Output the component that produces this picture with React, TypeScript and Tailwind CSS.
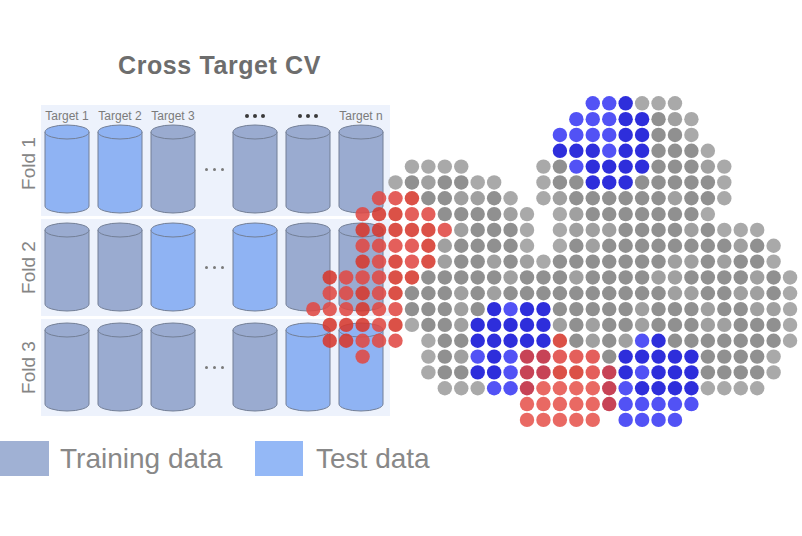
import React from "react";

// dot cloud: g = gray, b = blue, r = red, d = dark red
const GRID = [
  ".................bbbggg.......",
  "................bbbbbggg......",
  "...............bbbbbbggg......",
  "...............bbbbbbgggg.....",
  "......gggg....ggbbbbbggggg....",
  ".....ggggggg..gggbbbgggggg....",
  "....rrrgggggg.gggggggggggg....",
  "...rrrrrgggggg.gggggggggg.....",
  "...rrrrrrggggg.ggggggggggggg..",
  "...rrrrrgggggg.gggggggggggggg.",
  "...rrrrrggggggggggggggggggggg.",
  ".rrrrrrggggggggggggggggggggggg",
  ".rrrrrgggggggggggggggggggggggg",
  "rrrrrrgggggbbbbggggggggggggggg",
  ".rrrrrggggbbbbbggggggggggggggg",
  ".rrrrr.gggbbbbbrggggbbgggggggg",
  "...r...gggbbbddrrrgbbbbbggggg.",
  ".......gggbbbddrrrdbbbbbggggg.",
  "........gggbbdrrrrdbbbbbgggg..",
  ".............rrrrrdbbbbb......",
  ".............rrrrr.bbbb.......",
];

const X0 = 313.3;
const DX = 16.44;
const Y0 = 103.3;
const DY = 15.83;

const hash = (r: number, c: number) => (((r * 92821) ^ (c * 68917) ^ (r * c * 31)) >>> 0) % 100;

const cell = (r: number, c: number) => (GRID[r] ? GRID[r][c] ?? "." : ".");

function dotColor(r: number, c: number, k: string) {
  const h = hash(r, c);
  if (k === "g") {
    const edge = [cell(r - 1, c), cell(r + 1, c), cell(r, c - 1), cell(r, c + 1)].some((n) => n === ".");
    if (edge) return "#a4a4a4";
    return h < 30 ? "#9b9b9b" : "#8a8a8a";
  }
  if (k === "b") {
    const light = (r <= 2 && c <= 18) || r >= 19 || (r >= 16 && c === 12) || (r === 18 && c === 11) || h < 15;
    return light ? "#4848f4" : "#2323d9";
  }
  if (k === "d") return "#bf2a3f";
  if (r >= 18) return "#e6544e";
  return h < 45 ? "#d63a2f" : "#e04a44";
}

function DotCloud() {
  const dots: React.ReactNode[] = [];
  GRID.forEach((row, r) => {
    row.split("").forEach((k, c) => {
      if (k === ".") return;
      dots.push(
        <circle
          key={`${r}-${c}`}
          cx={X0 + DX * c}
          cy={Y0 + DY * r}
          r={7.2}
          fill={dotColor(r, c, k)}
          fillOpacity={k === "r" || k === "d" ? 0.88 : 0.95}
        />
      );
    });
  });
  return (
    <svg className="absolute inset-0 pointer-events-none" width="802" height="536" viewBox="0 0 802 536">
      <defs>
        <filter id="soft" x="-5%" y="-5%" width="110%" height="110%">
          <feGaussianBlur stdDeviation="0.45" />
        </filter>
      </defs>
      <g filter="url(#soft)">{dots}</g>
    </svg>
  );
}

function Cylinder({ test }: { test: boolean }) {
  const fill = test ? "#8fb3f3" : "#9aabd0";
  return (
    <svg width="46" height="90" viewBox="0 0 46 90" className="shrink-0">
      <path d="M1 8 V82 A22 7 0 0 0 45 82 V8" fill={fill} stroke="#737f96" strokeWidth="1" />
      <ellipse cx="23" cy="8" rx="22" ry="7" fill={fill} stroke="#737f96" strokeWidth="1" />
    </svg>
  );
}

function Dots({ big }: { big?: boolean }) {
  return (
    <div className={`flex items-center ${big ? "gap-[4px]" : "gap-[5px]"}`}>
      {[0, 1, 2].map((i) => (
        <span
          key={i}
          className={big ? "w-[4px] h-[4px] rounded-full bg-[#3a3a3a]" : "w-[3px] h-[3px] rounded-full bg-[#7a7a7a]"}
        />
      ))}
    </div>
  );
}

const FOLDS = [
  [true, true, false, false, false, false],
  [false, false, true, true, false, false],
  [false, false, false, false, true, true],
];

const HEADERS = ["Target 1", "Target 2", "Target 3", "", "", "Target n"];

function FoldRow({ index }: { index: number }) {
  const pattern = FOLDS[index];
  const first = index === 0;
  return (
    <div className="flex">
      <div className={`w-[41px] flex items-center justify-center pl-[16px] ${first ? "pt-[6px]" : ""}`}>
        <span className="-rotate-90 whitespace-nowrap text-[19px] leading-none text-[#858585]">Fold {index + 1}</span>
      </div>
      <div className={`w-[349px] bg-[#edf2fc] pl-[3px] ${first ? "pt-[2px] pb-[2px]" : "pt-[3px] pb-[4px]"}`}>
        {first && (
          <div className="flex h-[17px] items-center">
            {HEADERS.map((h, i) => (
              <React.Fragment key={i}>
                {i === 3 && <div className="w-[36px] shrink-0" />}
                <div className={`w-[46px] shrink-0 flex justify-center ${i > 0 && i !== 3 ? "ml-[7px]" : ""}`}>
                  {h ? (
                    <span className="text-[12px] leading-none whitespace-nowrap text-[#7b7b7b]">{h}</span>
                  ) : (
                    <Dots big />
                  )}
                </div>
              </React.Fragment>
            ))}
          </div>
        )}
        <div className="flex items-center">
          {pattern.map((t, i) => (
            <React.Fragment key={i}>
              {i === 3 && (
                <div className="w-[36px] shrink-0 flex justify-center">
                  <Dots />
                </div>
              )}
              <div className={i > 0 && i !== 3 ? "ml-[7px]" : ""}>
                <Cylinder test={t} />
              </div>
            </React.Fragment>
          ))}
        </div>
      </div>
    </div>
  );
}

export default function App() {
  return (
    <div className="relative w-[802px] h-[536px] bg-white overflow-hidden font-['Liberation_Sans',Arial,sans-serif]">
      <div className="flex flex-col pt-[50px]">
        <div className="ml-[41px] w-[357px] h-[30px] text-center text-[25px] leading-[30px] font-bold tracking-[0.6px] text-[#6d6d6d]">
          Cross Target CV
        </div>
        <div className="mt-[25px] flex flex-col gap-[3px]">
          {[0, 1, 2].map((i) => (
            <FoldRow key={i} index={i} />
          ))}
        </div>
        <div className="mt-[25px] flex items-center h-[35px]">
          <div className="w-[255px] flex items-center">
            <div className="w-[49px] h-[35px] bg-[#a0b1d4]" />
            <span className="ml-[11px] text-[28px] leading-[35px] text-[#888888]">Training data</span>
          </div>
          <div className="w-[48px] h-[35px] bg-[#94b8f6]" />
          <span className="ml-[13px] text-[28px] leading-[35px] text-[#888888]">Test data</span>
        </div>
      </div>
      <DotCloud />
    </div>
  );
}
